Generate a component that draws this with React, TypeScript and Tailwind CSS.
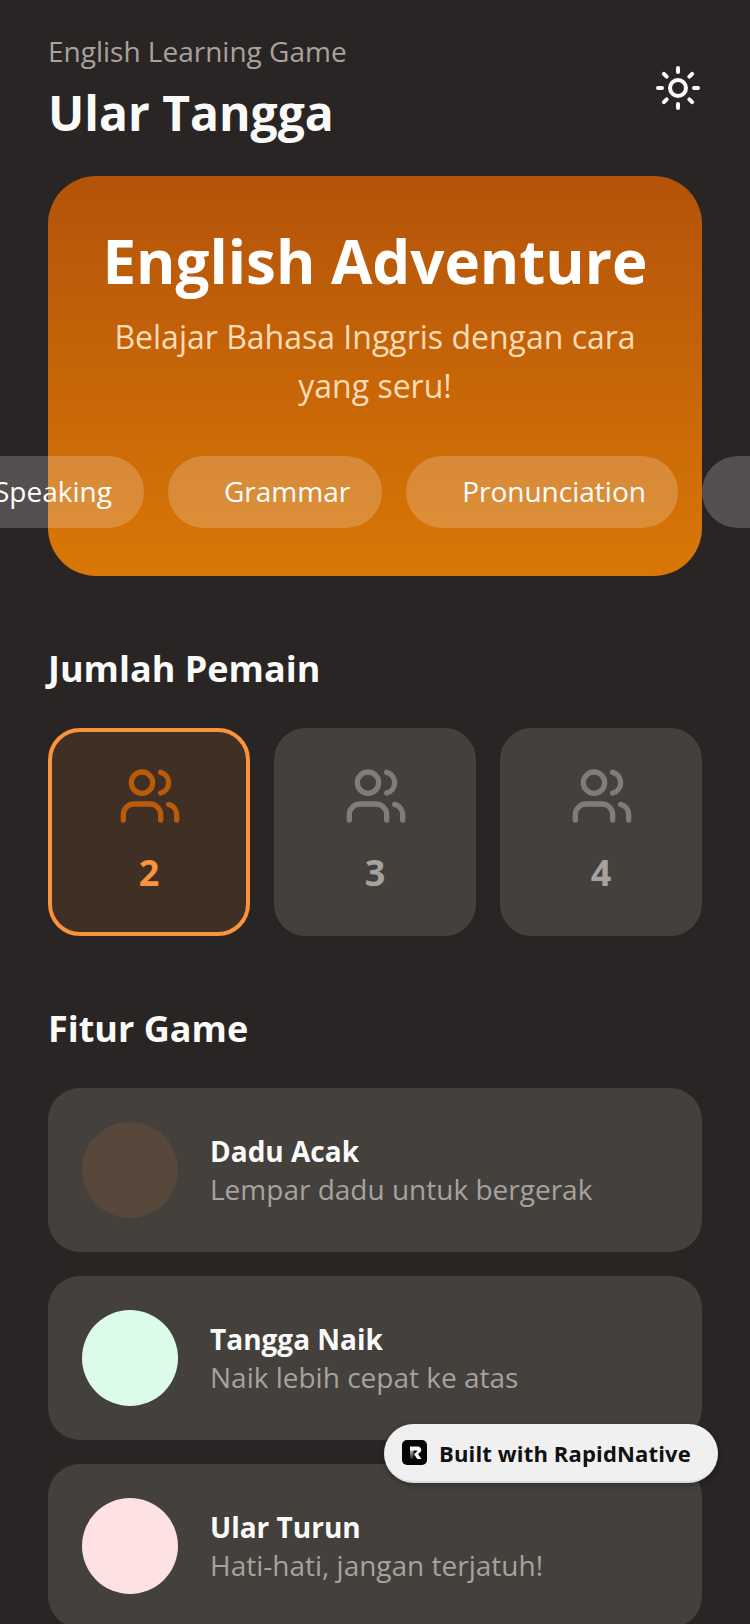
import { Sun, Users } from "lucide-react";

const font = { fontFamily: '"Open Sans", sans-serif' };

const pills = ["Speaking", "Grammar", "Pronunciation", "Vocabulary"];

const features = [
  { t: "Dadu Acak", d: "Lempar dadu untuk bergerak", c: "bg-[#57483b]" },
  { t: "Tangga Naik", d: "Naik lebih cepat ke atas", c: "bg-[#dcfce7]" },
  { t: "Ular Turun", d: "Hati-hati, jangan terjatuh!", c: "bg-[#fee2e2]" },
];

export default function App() {
  return (
    <div style={font} className="relative h-[1624px] w-[750px] overflow-hidden bg-[#292524] text-[#fafaf9]">
      <header className="flex items-center justify-between px-12 pt-[31px]">
        <div>
          <p className="text-[28px] leading-[40px] text-[#a8a29e]">English Learning Game</p>
          <h1 className="mt-[10px] text-[48px] font-bold leading-[64px]">Ular Tangga</h1>
        </div>
        <Sun size={48} strokeWidth={2} className="text-[#fafaf9]" />
      </header>

      <section className="relative mt-[31px]">
        <div className="mx-12 h-[400px] rounded-[48px] bg-gradient-to-b from-[#b45309] to-[#d97706] px-8 pt-[47px] text-center">
          <h2 className="text-[60px] font-bold leading-[76px] text-white">English Adventure</h2>
          <p className="mt-[13px] text-[32px] leading-[49px] text-[#fddcb8]">
            Belajar Bahasa Inggris dengan cara yang seru!
          </p>
        </div>
        <div className="absolute left-0 top-[280px] flex w-[750px] overflow-hidden">
          <div className="ml-[-62px] flex shrink-0 gap-6">
            {pills.map((p) => (
              <div
                key={p}
                className="flex h-[72px] shrink-0 items-center rounded-full bg-white/20 pb-[2px] pl-14 pr-8 text-[28px] leading-[40px] text-white"
              >
                {p}
              </div>
            ))}
          </div>
        </div>
      </section>

      <section className="px-12">
        <h3 className="mt-[69px] text-[36px] font-bold leading-[48px]">Jumlah Pemain</h3>
        <div className="mt-[35px] grid grid-cols-3 gap-6">
          {[2, 3, 4].map((n) => {
            const on = n === 2;
            return (
              <div
                key={n}
                className={
                  on
                    ? "flex h-[208px] flex-col items-center rounded-[32px] border-4 border-[#fb923c] bg-[#3f2f25] pt-8"
                    : "flex h-[208px] flex-col items-center rounded-[32px] border-4 border-[#44403c] bg-[#44403c] pt-8"
                }
              >
                <Users size={64} strokeWidth={2} className={on ? "ml-[2px] text-[#b85c0a]" : "ml-[2px] text-[#7f7c79]"} />
                <span className={on ? "mt-[21px] text-[36px] font-bold leading-[48px] text-[#fb923c]" : "mt-[21px] text-[36px] font-bold leading-[48px] text-[#a8a29e]"}>
                  {n}
                </span>
              </div>
            );
          })}
        </div>

        <h3 className="mt-[69px] text-[36px] font-bold leading-[48px]">Fitur Game</h3>
        <div className="mt-[35px] flex flex-col gap-6">
          {features.map((f) => (
            <div key={f.t} className="flex h-[164px] shrink-0 items-center gap-8 rounded-[32px] bg-[#44403c] px-[34px]">
              <div className={`h-24 w-24 shrink-0 rounded-full ${f.c}`} />
              <div>
                <p className="text-[28px] font-bold leading-[38px] text-[#fafaf9]">{f.t}</p>
                <p className="text-[28px] leading-[38px] text-[#a8a29e]">{f.d}</p>
              </div>
            </div>
          ))}
        </div>
      </section>

      <div className="absolute left-[384px] top-[1424px] flex h-[59px] w-[334px] items-center gap-3 rounded-full border-b-2 border-[#dcdcdc] bg-[#f0f0f0] pl-[18px] shadow-[0_2px_6px_rgba(0,0,0,0.3)]">
        <svg width="25" height="25" viewBox="0 0 25 25" className="shrink-0">
          <defs>
            <linearGradient id="stem" x1="0" y1="0" x2="0" y2="1">
              <stop offset="0" stopColor="#bdbdbd" />
              <stop offset="1" stopColor="#1a1a1a" />
            </linearGradient>
          </defs>
          <rect width="25" height="25" rx="5" fill="#050505" />
          <path d="M8 10h3.5v9H8z" fill="url(#stem)" />
          <path d="M8 6.5h8a3.4 3.4 0 0 1 2.3 5.8L16 14l3.5 5h-4.2L12 14.2l3-2.6a.6.6 0 0 0-.4-1.1H8z" fill="#f8f8f8" />
        </svg>
        <span className="whitespace-nowrap text-[22px] font-bold leading-[30px] tracking-[0.15px] text-[#111111]">Built with RapidNative</span>
      </div>
    </div>
  );
}
